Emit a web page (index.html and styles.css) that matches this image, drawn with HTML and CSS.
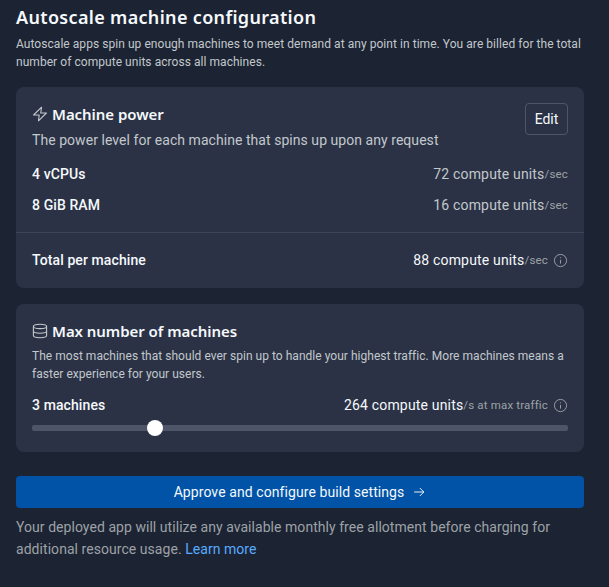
FILE: index.html
```html
<!DOCTYPE html>
<html lang="en">
<head>
<meta charset="utf-8">
<title>Autoscale machine configuration</title>
<link rel="stylesheet" href="styles.css">
</head>
<body>
<main class="page">
  <h1 class="title">Autoscale machine configuration</h1>
  <p class="intro">Autoscale apps spin up enough machines to meet demand at any point in time. You are billed for the total number of compute units across all machines.</p>

  <section class="card power">
    <div class="power-head">
      <div>
        <h2 class="card-title">
          <svg class="icon" viewBox="0 0 16 16" fill="none" stroke="currentColor" stroke-width="1.1" stroke-linejoin="round"><path d="M9.6 1.2 1.6 9h5.6l-.7 5.8L14.4 7H8.7z"/></svg>
          Machine power
        </h2>
        <p class="card-desc">The power level for each machine that spins up upon any request</p>
      </div>
      <button class="edit" type="button">Edit</button>
    </div>
    <div class="row spec"><span class="label">4 vCPUs</span><span class="value">72 compute units<small>/sec</small></span></div>
    <div class="row spec"><span class="label">8 GiB RAM</span><span class="value">16 compute units<small>/sec</small></span></div>
    <div class="row total"><span class="label">Total per machine</span><span class="value strong">88 compute units<small>/sec</small>
      <svg class="info" viewBox="0 0 16 16" fill="none" stroke="currentColor"><circle cx="8" cy="8" r="6.5"/><path d="M8 7.3v4" /><path d="M8 4.6v1" /></svg></span></div>
  </section>

  <section class="card machines">
    <h2 class="card-title">
      <svg class="icon" viewBox="0 0 16 16" fill="none" stroke="currentColor" stroke-width="1.1"><ellipse cx="8" cy="3.4" rx="6.6" ry="2.2"/><path d="M1.4 3.4v9.2c0 1.2 3 2.2 6.6 2.2s6.6-1 6.6-2.2V3.4"/><path d="M1.4 8c0 1.2 3 2.2 6.6 2.2s6.6-1 6.6-2.2"/></svg>
      Max number of machines
    </h2>
    <p class="machines-desc">The most machines that should ever spin up to handle your highest traffic. More machines means a faster experience for your users.</p>
    <div class="row count"><span class="label">3 machines</span><span class="value strong">264 compute units<small>/s at max traffic</small>
      <svg class="info" viewBox="0 0 16 16" fill="none" stroke="currentColor"><circle cx="8" cy="8" r="6.5"/><path d="M8 7.3v4" /><path d="M8 4.6v1" /></svg></span></div>
    <div class="slider"><span class="thumb"></span></div>
  </section>

  <button class="approve" type="button"><span>Approve and configure build settings</span>
    <svg class="arrow" viewBox="0 0 16 16" fill="none" stroke="currentColor" stroke-width="1.1"><path d="M2.5 8h11M9 3.5 13.5 8 9 12.5"/></svg>
  </button>
  <p class="note">Your deployed app will utilize any available monthly free allotment before charging for additional resource usage. <a href="#">Learn more</a></p>
</main>
</body>
</html>
```
FILE: styles.css
```css
* { box-sizing: border-box; }
html, body { margin: 0; height: 100%; }
body {
  background: #1c2333;
  color: #f5f9fc;
  font-family: Roboto, "Noto Sans", sans-serif;
  overflow: hidden;
}
.page { padding: 5px 25px 0 16px; }
.title { margin: 0; font-family: "Noto Sans", sans-serif; font-size: 18px; line-height: 24px; font-weight: 600; letter-spacing: .33px; }
.intro { margin: 6px 0 0; font-size: 12px; line-height: 18px; color: #c2c8cc; letter-spacing: .05px; }
.card { background: #2b3245; border-radius: 8px; }
.power { margin-top: 16px; padding: 16px 16px 0; height: 201px; }
.power-head { display: flex; justify-content: space-between; align-items: flex-start; }
.card-title { margin: 0; display: flex; align-items: center; gap: 4px; font-family: "Noto Sans", sans-serif; font-size: 15px; line-height: 22px; font-weight: 600; letter-spacing: -.05px; }
.icon { width: 16px; height: 16px; color: #c2c8cc; }
.card-desc { margin: 5px 0 0; font-size: 14px; line-height: 20px; color: #c2c8cc; letter-spacing: .05px; }
.edit {
  width: 43px; height: 32px; padding: 0;
  background: transparent; color: #f5f9fc;
  border: 1px solid #4e5569; border-radius: 4px;
  font: 14px Roboto, sans-serif;
}
.row { display: flex; justify-content: space-between; align-items: center; font-size: 14px; letter-spacing: .17px; }
.spec { height: 20px; margin-top: 11px; }
.power-head + .spec { margin-top: 14px; }
.label { font-weight: 500; letter-spacing: .1px; }
.value { color: #c2c8cc; display: flex; align-items: center; }
.value small { font-size: 11.5px; color: #9da2a6; }
.strong { color: #f5f9fc; }
.total {
  height: 55px; margin: 17px -16px 0; padding: 0 16px;
  border-top: 1px solid #3c445c;
}
.info { width: 15px; height: 15px; margin-left: 5px; color: #9da2a6; }
.machines { margin-top: 16px; padding: 16px; height: 148px; }
.machines-desc { margin: 5px 0 0; font-size: 12px; line-height: 18px; color: #c2c8cc; letter-spacing: .03px; }
.count { margin-top: 12px; height: 20px; }
.slider { position: relative; height: 6px; margin-top: 10px; background: #4e5569; border-radius: 2px; }
.thumb {
  position: absolute; left: 115px; top: -5px;
  width: 16px; height: 16px; border-radius: 50%; background: #fff;
}
.approve {
  display: flex; align-items: center; justify-content: center; gap: 8px;
  width: 100%; height: 32px; margin-top: 24px; padding: 0;
  background: #0053a6; color: #f5f9fc; border: 0; border-radius: 4px;
  font: 14px Roboto, sans-serif; letter-spacing: .08px;
}
.arrow { width: 14px; height: 14px; }
.note { margin: 8px 0 0; font-size: 14px; line-height: 22px; color: #9da2a6; letter-spacing: .05px; }
.note a { color: #57abff; text-decoration: none; }
```
